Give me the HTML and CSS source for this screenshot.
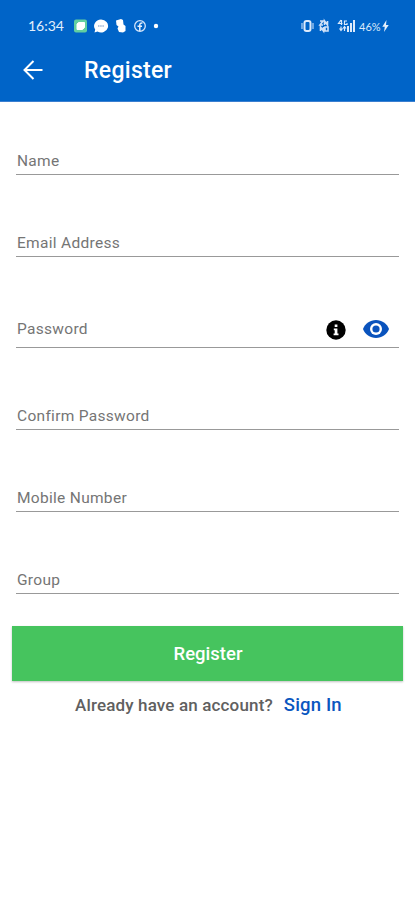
FILE: index.html
```html
<!DOCTYPE html>
<html lang="en">
<head>
    <meta charset="UTF-8">
    <meta name="viewport" content="width=device-width, initial-scale=1.0">
    <title>Register</title>
    <link rel="stylesheet" href="styles.css">
</head>
<body>
    <header>
        <div class="status-bar">
            <span class="time">16:34</span>
            <svg class="notifications" width="90" height="16" viewBox="0 0 90 16">
                <rect x="1" y="1.5" width="13" height="13" rx="2" fill="#62cfa0"/>
                <path d="M5.500 4.500h6v5l-2 2H4V6z" fill="#fff" stroke="#fff" stroke-linejoin="round"/>
                <path d="M28 1.500a7 6.500 0 1 1-3.500 12.100L21.500 14.500l.7-3A7 6.500 0 0 1 28 1.500z" fill="#fff"/>
                <path d="M25 8h6" stroke="#6b8fc0" stroke-width="1.200" stroke-dasharray="1.500 .7"/>
                <path d="M43 2.500l5-1.500 2 1 .5 4.500 2 1.500v5l-2.500 1.500-4-.5-1.500-3.500 1-2-2-1.500z" fill="#fff"/>
                <circle cx="67" cy="8" r="5.300" fill="none" stroke="#d4e5fa" stroke-width="1.300"/>
                <path d="M66.800 13V7q0-2.200 2.700-1.900M64.500 8.300h4.500" fill="none" stroke="#e6f0fc" stroke-width="1.500"/>
                <circle cx="83" cy="8" r="2.200" fill="#fff"/>
            </svg>
            <svg class="signals" width="55" height="16" viewBox="0 0 55 16">
                <rect x="3.500" y="3" width="6" height="10" rx="2" fill="none" stroke="#dceafb" stroke-width="2"/>
                <path d="M1 5v6M12 5v6" stroke="#a9cbf2" stroke-width="1.300"/>
                <path d="M19 3h3l-3 4h3M23.500 7V3l3 4V3M19.500 13V9l3 4V9M24 9h3v4h-3z" fill="none" stroke="#cfe1f8" stroke-width="1.600"/>
                <path d="M40 2l-2.500 3.500h4M40.500 2v5M46 3h-2.500v3.500H46V5M40 8.500v3.500M38.500 10.500L40 12.500l1.500-2M43.500 13V9M42 10.500L43.500 8.500l1.500 2" fill="none" stroke="#dceafb" stroke-width="1.200"/>
                <path d="M46 8h2v6h-2zM49 5h2v9h-2zM52 2h2v12h-2z" fill="#dceafb"/>
            </svg>
            <span class="battery">46%</span>
            <svg class="bolt" width="7" height="12" viewBox="0 0 7 12">
                <path d="M4.500 0L.3 6.800h2.500L2 12l4.700-7H4z" fill="#e6f0fc"/>
            </svg>
        </div>
        <div class="title-bar">
            <svg width="20" height="20" viewBox="0 0 20 20" fill="none" stroke="#fff" stroke-width="2">
                <path d="M19.500 10H2M10.500 1L1.500 10l9 9"/>
            </svg>
            <h1>Register</h1>
        </div>
    </header>

    <form id="register-form">
        <div class="field">
            <label for="name">Name</label>
            <input type="text" id="name">
        </div>
        <div class="field">
            <label for="email">Email Address</label>
            <input type="email" id="email">
        </div>
        <div class="field password">
            <label for="password">Password</label>
            <input type="password" id="password">
            <svg class="info" width="20" height="20" viewBox="0 0 20 20">
                <circle cx="10" cy="10" r="9.700" fill="#000"/>
                <path d="M8.700 4.500h2.700v2.600H8.700zM7.800 8.500h3.600v5h1.100v1.800H7.600v-1.800h1.100v-3.200h-.9z" fill="#fff"/>
            </svg>
            <svg class="eye" width="26" height="18" viewBox="0 0 26 18">
                <path d="M13 0C7.100 0 2.100 3.700 0 9c2.100 5.300 7.100 9 13 9s10.900-3.700 13-9C23.900 3.700 18.900 0 13 0z" fill="#0a53bd"/>
                <circle cx="13" cy="9" r="6" fill="#fff"/>
                <circle cx="13" cy="9" r="3.600" fill="#0a53bd"/>
            </svg>
        </div>
        <div class="field">
            <label for="confirm">Confirm Password</label>
            <input type="password" id="confirm">
        </div>
        <div class="field">
            <label for="mobile">Mobile Number</label>
            <input type="tel" id="mobile">
        </div>
        <div class="field">
            <label for="group">Group</label>
            <input type="text" id="group">
        </div>
        <button type="button">Register</button>
    </form>

    <p class="sign-in">Already have an account? <a href="#">Sign In</a></p>
</body>
</html>
```

FILE: styles.css
```css
* {
    box-sizing: border-box;
}

body {
    font-family: Roboto, sans-serif;
    background-color: #fff;
    margin: 0;
}

svg {
    display: block;
    flex: none;
}

header {
    height: 102px;
    background-color: #0064c8;
    border-bottom: 1px solid #3a7fd0;
    color: #fff;
    padding-top: 16px;
}

.status-bar {
    display: flex;
    align-items: center;
    height: 20px;
    padding-left: 28px;
}

.time {
    width: 44px;
    font-family: Lato, sans-serif;
    font-size: 14px;
    line-height: 18px;
    color: #e3effc;
}

.notifications {
    margin-left: 1px;
}

.signals {
    margin-left: 138px;
}

.battery {
    width: 21px;
    margin-left: 3px;
    font-family: Lato, sans-serif;
    font-size: 11px;
    color: #dceafb;
}

.bolt {
    margin-left: 2px;
}

.title-bar {
    display: flex;
    align-items: center;
    height: 36px;
    margin-top: 16px;
    padding-left: 23px;
}

h1 {
    margin: 1px 0 0 41px;
    font-size: 23px;
    font-weight: 500;
    letter-spacing: 0.3px;
}

form {
    padding: 0 12px;
}

.field {
    display: flex;
    align-items: flex-end;
    height: 82px;
    margin: 0 4px;
    padding: 0 0 4px 1px;
    border-bottom: 1px solid #999;
}

.field:first-child {
    height: 73px;
}

.field.password {
    height: 91px;
    padding-bottom: 9px;
}

label {
    font-size: 15.5px;
    line-height: 18px;
    letter-spacing: 0.3px;
    color: #757575;
}

input {
    flex: 1;
    min-width: 0;
    height: 18px;
    padding: 0;
    border: none;
    outline: none;
    background: none;
}

.info {
    margin-bottom: -2px;
}

.eye {
    margin: 0 10px 0 17px;
}

button {
    display: block;
    width: 100%;
    height: 55px;
    margin-top: 32px;
    padding: 1px 0 0 1px;
    border: none;
    background-color: #46c45e;
    box-shadow: 0 1px 2px rgba(0, 0, 0, 0.25);
    color: #fff;
    font-family: inherit;
    font-size: 18.5px;
    font-weight: 500;
    cursor: pointer;
}

.sign-in {
    display: flex;
    align-items: baseline;
    margin: 13px 0 0 75px;
    font-size: 17px;
    font-weight: 500;
    letter-spacing: 0.15px;
    color: #606060;
}

.sign-in a {
    margin-left: 11px;
    font-size: 18.5px;
    color: #0a56c0;
    text-decoration: none;
}
```
